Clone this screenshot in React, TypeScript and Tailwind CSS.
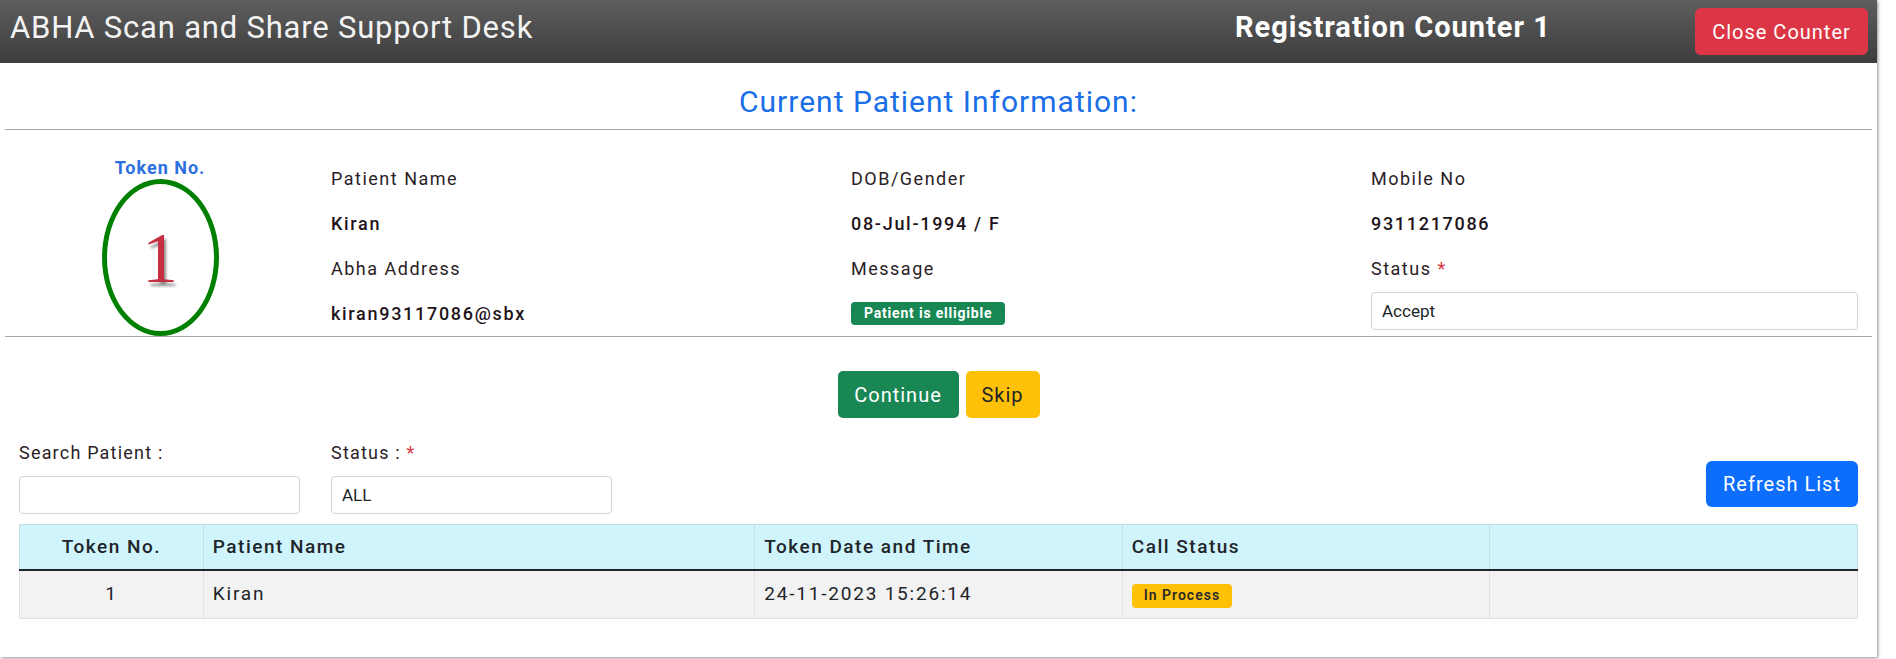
import { useState } from "react";

const labelCls = "text-[18px] tracking-[1.5px] text-[#2a1d26] leading-none";
const valueCls = "text-[18px] tracking-[1.7px] font-medium text-[#1f141b] leading-none";

function InfoCell({ children }: { children: React.ReactNode }) {
  return <div className="h-[45px] flex items-center">{children}</div>;
}

export default function App() {
  const [status, setStatus] = useState("Accept");
  const [search, setSearch] = useState("");
  const [listStatus, setListStatus] = useState("ALL");

  return (
    <div className="min-h-screen bg-white font-['Roboto',sans-serif]">
      <div className="w-[1877px] h-[657px] bg-white flex flex-col shadow-[1px_1px_3px_rgba(0,0,0,0.45)]">
        {/* Header */}
        <header className="h-[63px] shrink-0 flex items-center pl-[10px] pr-[9px] bg-linear-to-b from-[#5e5e5e] to-[#3d3d3d]">
          <h1 className="text-[31px] tracking-[0.8px] text-[#f3f3f3] leading-none -mt-[9px]">
            ABHA Scan and Share Support Desk
          </h1>
          <div className="ml-auto mr-[144px] text-[29px] font-bold tracking-[1px] text-white leading-none -mt-[9px]">
            Registration Counter 1
          </div>
          <button className="w-[173px] h-[47px] rounded-[6px] bg-[#dc3545] text-white text-[20px] tracking-[1px]">
            Close Counter
          </button>
        </header>

        {/* Current patient */}
        <div className="h-[66px] pt-[12px] flex items-center justify-center">
          <h2 className="text-[30px] tracking-[1px] text-[#1a6ee8] leading-none">
            Current Patient Information:
          </h2>
        </div>
        <div className="mx-[5px] h-px bg-[#a8a8a8]" />

        <div className="flex pt-[26px]">
          <div className="w-[331px] shrink-0 flex flex-col items-center mt-[3px] pr-[11px]">
            <div className="text-[18px] font-bold tracking-[1px] text-[#2c6fe0] leading-none">
              Token No.
            </div>
            <div className="mt-[2px] w-[117px] h-[157px] rounded-[50%] border-[5px] border-[#008000] flex items-center justify-center">
              <span className="font-['Liberation_Serif',serif] text-[72px] leading-none text-[#c62f42] [text-shadow:2px_4px_3px_rgba(0,0,0,0.45)]">
                1
              </span>
            </div>
          </div>

          <div className="flex-1 grid grid-cols-[520px_520px_1fr]">
            <div className="flex flex-col">
              <InfoCell><span className={labelCls}>Patient Name</span></InfoCell>
              <InfoCell><span className={valueCls}>Kiran</span></InfoCell>
              <InfoCell><span className={labelCls}>Abha Address</span></InfoCell>
              <InfoCell><span className={valueCls}>kiran93117086@sbx</span></InfoCell>
            </div>
            <div className="flex flex-col">
              <InfoCell><span className={labelCls}>DOB/Gender</span></InfoCell>
              <InfoCell><span className={valueCls}>08-Jul-1994 / F</span></InfoCell>
              <InfoCell><span className={labelCls}>Message</span></InfoCell>
              <InfoCell>
                <span className="h-[23px] px-[13px] flex items-center rounded-[4px] bg-[#198754] text-white text-[14px] font-bold tracking-[0.8px]">
                  Patient is elligible
                </span>
              </InfoCell>
            </div>
            <div className="flex flex-col pr-[19px]">
              <InfoCell><span className={labelCls}>Mobile No</span></InfoCell>
              <InfoCell><span className={valueCls}>9311217086</span></InfoCell>
              <InfoCell>
                <span className={labelCls}>
                  Status <span className="text-[#dc3545]">*</span>
                </span>
              </InfoCell>
              <InfoCell>
                <input
                  value={status}
                  onChange={(e) => setStatus(e.target.value)}
                  className="w-full h-[38px] -mt-[6px] px-[10px] border border-[#ced4da] rounded-[4px] text-[17px] text-[#212529] outline-none"
                />
              </InfoCell>
            </div>
          </div>
        </div>
        <div className="mx-[5px] h-px bg-[#a8a8a8]" />

        {/* Actions */}
        <div className="flex justify-center gap-[7px] mt-[34px]">
          <button className="w-[121px] h-[47px] rounded-[5px] bg-[#198754] text-white text-[20px] tracking-[1px]">
            Continue
          </button>
          <button className="w-[74px] h-[47px] rounded-[5px] bg-[#ffc107] text-[#212529] text-[20px] tracking-[1px]">
            Skip
          </button>
        </div>

        {/* Filters */}
        <div className="flex items-end px-[19px] mt-[26px]">
          <div className="w-[281px]">
            <div className="text-[18px] tracking-[1.2px] text-[#2a1d26] leading-none mb-[14px]">Search Patient :</div>
            <input
              value={search}
              onChange={(e) => setSearch(e.target.value)}
              className="w-full h-[38px] px-[10px] border border-[#ced4da] rounded-[4px] outline-none"
            />
          </div>
          <div className="w-[281px] ml-[31px]">
            <div className="text-[18px] tracking-[1.2px] text-[#2a1d26] leading-none mb-[14px]">
              Status : <span className="text-[#dc3545]">*</span>
            </div>
            <input
              value={listStatus}
              onChange={(e) => setListStatus(e.target.value)}
              className="w-full h-[38px] px-[10px] border border-[#ced4da] rounded-[4px] text-[17px] text-[#212529] outline-none"
            />
          </div>
          <button className="ml-auto mb-[7px] w-[152px] h-[46px] rounded-[6px] bg-[#0d6efd] text-white text-[20px] tracking-[1px]">
            Refresh List
          </button>
        </div>

        {/* Table */}
        <div className="px-[19px] mt-[10px]">
          <table className="w-full border-collapse text-[19px] tracking-[1.8px] text-[#212529]">
            <thead>
              <tr className="bg-[#cff4fc] h-[45px]">
                <th className="w-[10%] border border-[#c5dfe6] border-b-[#212529] border-b-2 font-medium tracking-[1.5px] text-center">Token No.</th>
                <th className="w-[30%] border border-[#c5dfe6] border-b-[#212529] border-b-2 font-medium tracking-[1.5px] text-left px-[9px]">Patient Name</th>
                <th className="w-[20%] border border-[#c5dfe6] border-b-[#212529] border-b-2 font-medium tracking-[1.5px] text-left px-[9px]">Token Date and Time</th>
                <th className="w-[20%] border border-[#c5dfe6] border-b-[#212529] border-b-2 font-medium tracking-[1.5px] text-left px-[9px]">Call Status</th>
                <th className="w-[20%] border border-[#c5dfe6] border-b-[#212529] border-b-2" />
              </tr>
            </thead>
            <tbody>
              <tr className="bg-[#f2f2f2] h-[49px]">
                <td className="border border-[#dee2e6] text-center">1</td>
                <td className="border border-[#dee2e6] px-[9px]">Kiran</td>
                <td className="border border-[#dee2e6] px-[9px]">24-11-2023 15:26:14</td>
                <td className="border border-[#dee2e6] px-[9px]">
                  <span className="inline-flex items-center h-[24px] px-[12px] rounded-[4px] bg-[#ffc107] text-[#2a2a2a] text-[14px] font-semibold tracking-[1px]">
                    In Process
                  </span>
                </td>
                <td className="border border-[#dee2e6]" />
              </tr>
            </tbody>
          </table>
        </div>
      </div>
    </div>
  );
}
